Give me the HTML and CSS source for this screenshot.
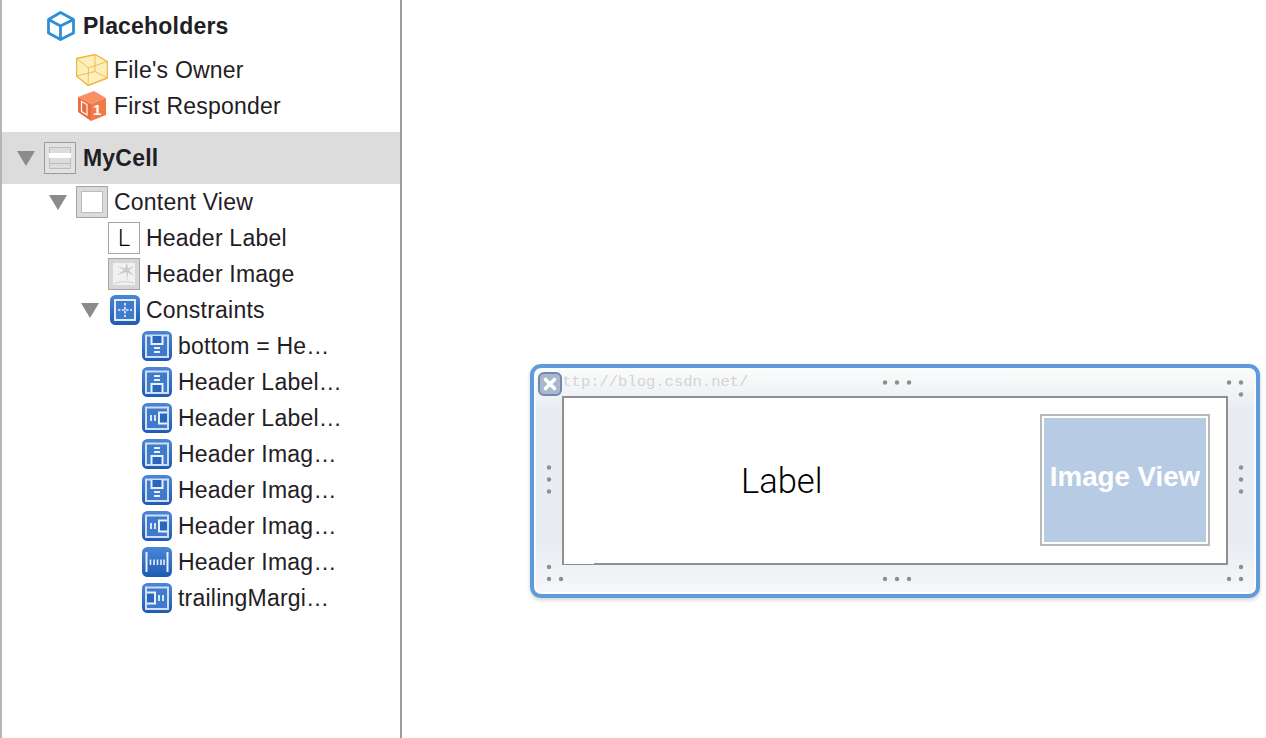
FILE: index.html
```html
<!DOCTYPE html>
<html lang="en">
<head>
<meta charset="utf-8">
<title>MyCell</title>
<link rel="stylesheet" href="styles.css">
</head>
<body>
<svg class="defs" width="0" height="0" aria-hidden="true">
  <defs>
    <linearGradient id="blue" x1="0" y1="0" x2="0" y2="1">
      <stop offset="0" stop-color="#4a86d8"/>
      <stop offset="1" stop-color="#1f5bb2"/>
    </linearGradient>
    <g id="bd"><rect x="0" y="0" width="30" height="30" rx="5.500" fill="url(#blue)"/></g>
    <g id="frame"><rect x="4" y="4.500" width="22" height="21.500" fill="#3f7bcd" stroke="#cfdef2" stroke-width="2"/></g>
  </defs>
</svg>
<div class="app">
  <aside class="outline">
    <div class="row head l-ph">
      <svg class="ic-cube" viewBox="0 0 28 30"><path d="M13.500 1.500 26.500 8.500V22L13.500 28.500 1.500 22V8.500ZM1.500 8.500 13.500 15 26.500 8.500M13.500 15V28.500" fill="none" stroke="#2d8fd8" stroke-width="2.800" stroke-linejoin="round"/></svg>
      <span class="bold">Placeholders</span>
    </div>
    <div class="row l1 first">
      <svg class="ic32" viewBox="0 0 32 32"><path d="M0.500 4.500 19 0.500 31.500 7.500V24L12 31.500 0.500 22Z" fill="#fdefbb" stroke="#efb542" stroke-width="1.400" stroke-linejoin="round"/><path d="M0.500 4.500 12.500 14 31.500 7.500M12.500 14 12 31.500M19 0.500V17.500L0.500 22M19 17.500 31.500 24" fill="none" stroke="#efb542" stroke-opacity=".85"/></svg>
      <span>File's Owner</span>
    </div>
    <div class="row l1">
      <svg class="ic32" viewBox="0 0 32 32"><path d="M2 7 18 1 30 8 15 14Z" fill="#f79063"/><path d="M2 7 15 14V31L2 22Z" fill="#ed6c3b"/><path d="M15 14 30 8V25L15 31Z" fill="#f27a49"/><path d="M5.500 11.500 11 14.500V25L5.500 21.500Z" fill="none" stroke="#fff" stroke-width="1.200"/><text x="17" y="25" class="one">1</text></svg>
      <span>First Responder</span>
    </div>
    <div class="row selected">
      <span class="tri"></span>
      <svg class="ic32" viewBox="0 0 32 32"><rect x="0.500" y="0.500" width="31" height="31" fill="#e2e2e2" stroke="#9b9b9b"/><rect x="5.500" y="5.500" width="21" height="21" fill="#dcdcdc" stroke="#bdbdbd"/><rect x="5" y="11" width="22" height="5" fill="#fff"/><path d="M5 21.500H27" stroke="#bdbdbd"/></svg>
      <span class="bold">MyCell</span>
    </div>
    <div class="row l1">
      <span class="tri"></span>
      <svg class="ic32" viewBox="0 0 32 32"><rect x="0.500" y="0.500" width="31" height="31" fill="#dadada" stroke="#a5a5a5"/><rect x="5.500" y="5.500" width="21" height="21" fill="#fff" stroke="#bcbcbc"/></svg>
      <span>Content View</span>
    </div>
    <div class="row l2">
      <span class="lbl-ic">L</span>
      <span>Header Label</span>
    </div>
    <div class="row l2">
      <svg class="ic32" viewBox="0 0 32 32"><rect x="0.500" y="0.500" width="31" height="31" fill="#d6d6d6" stroke="#a5a5a5"/><rect x="5" y="5" width="22" height="22" fill="#f1f1f1"/><path d="M19 24 18.500 14 9 17 16 12 9 8 17 10.500 19 5 20 10.500 26 8 21 12.500 26 18 20 14.500Z" fill="#c9c9c9"/><path d="M6 25.500Q15 22 26 25" stroke="#cfcfcf" fill="none"/></svg>
      <span>Header Image</span>
    </div>
    <div class="row l2">
      <span class="tri tri-c"></span>
      <svg class="ic30" viewBox="0 0 30 30"><use href="#bd"/><rect x="5" y="5" width="20" height="20" fill="#3f7bcd" stroke="#e3ecf8" stroke-width="2"/><path d="M15 8V22M8 15H22" stroke="#f0f5fc" stroke-width="1.600" stroke-dasharray="2.500 1.500"/></svg>
      <span>Constraints</span>
    </div>
    <div class="row l3">
      <svg class="ic30" viewBox="0 0 30 30"><use href="#bd"/><use href="#frame"/><path d="M9.500 5V13H20.500V5" fill="#2a66bd" stroke="#e8f0fa" stroke-width="2"/><path d="M12 17H18M12 21H18" stroke="#e8f0fa" stroke-width="1.800"/></svg>
      <span>bottom = He…</span>
    </div>
    <div class="row l3">
      <svg class="ic30" viewBox="0 0 30 30"><use href="#bd"/><use href="#frame"/><path d="M9.500 25V17H20.500V25" fill="#2a66bd" stroke="#e8f0fa" stroke-width="2"/><path d="M12 9H18M12 13H18" stroke="#e8f0fa" stroke-width="1.800"/></svg>
      <span>Header Label…</span>
    </div>
    <div class="row l3">
      <svg class="ic30" viewBox="0 0 30 30"><use href="#bd"/><use href="#frame"/><path d="M25 9.500H17V20.500H25" fill="#2a66bd" stroke="#e8f0fa" stroke-width="2"/><path d="M9 12V18M13 12V18" stroke="#e8f0fa" stroke-width="1.800"/></svg>
      <span>Header Label…</span>
    </div>
    <div class="row l3">
      <svg class="ic30" viewBox="0 0 30 30"><use href="#bd"/><use href="#frame"/><path d="M9.500 25V17H20.500V25" fill="#2a66bd" stroke="#e8f0fa" stroke-width="2"/><path d="M12 9H18M12 13H18" stroke="#e8f0fa" stroke-width="1.800"/></svg>
      <span>Header Imag…</span>
    </div>
    <div class="row l3">
      <svg class="ic30" viewBox="0 0 30 30"><use href="#bd"/><use href="#frame"/><path d="M9.500 5V13H20.500V5" fill="#2a66bd" stroke="#e8f0fa" stroke-width="2"/><path d="M12 17H18M12 21H18" stroke="#e8f0fa" stroke-width="1.800"/></svg>
      <span>Header Imag…</span>
    </div>
    <div class="row l3">
      <svg class="ic30" viewBox="0 0 30 30"><use href="#bd"/><use href="#frame"/><path d="M25 9.500H17V20.500H25" fill="#2a66bd" stroke="#e8f0fa" stroke-width="2"/><path d="M9 12V18M13 12V18" stroke="#e8f0fa" stroke-width="1.800"/></svg>
      <span>Header Imag…</span>
    </div>
    <div class="row l3">
      <svg class="ic30" viewBox="0 0 30 30"><use href="#bd"/><path d="M4.500 5V25M25.500 5V25" stroke="#e8f0fa" stroke-width="2"/><path d="M8.500 12.500V18M12 12.500V18M15.500 12.500V18M19 12.500V18M22 12.500V18" stroke="#e8f0fa" stroke-width="1.600"/></svg>
      <span>Header Imag…</span>
    </div>
    <div class="row l3">
      <svg class="ic30" viewBox="0 0 30 30"><use href="#bd"/><use href="#frame"/><path d="M5 9.500H13V20.500H5" fill="#2a66bd" stroke="#e8f0fa" stroke-width="2"/><path d="M17 12V18M21 12V18" stroke="#e8f0fa" stroke-width="1.800"/></svg>
      <span>trailingMargi…</span>
    </div>
  </aside>
  <main class="canvas">
    <section class="cell">
      <div class="content">
        <span class="label">Label</span>
        <div class="image-view"><span>Image View</span></div>
      </div>
      <span class="mark">http://blog.csdn.net/</span>
      <span class="close">
        <svg viewBox="0 0 24 24" width="24" height="24"><rect x="1" y="1" width="22" height="22" rx="5" fill="#a8b8ce" stroke="#7189aa" stroke-width="2"/><path d="M7.500 7.500 16.500 16.500M16.500 7.500 7.500 16.500" stroke="#fff" stroke-width="3.600" stroke-linecap="round"/></svg>
      </span>
      <svg class="dots" width="730" height="234" viewBox="0 0 730 234">
        <g fill="#8f8f8f">
          <circle cx="355" cy="18.500" r="2.200"/><circle cx="367" cy="18.500" r="2.200"/><circle cx="379" cy="18.500" r="2.200"/>
          <circle cx="699" cy="18.500" r="2.200"/><circle cx="711" cy="18.500" r="2.200"/><circle cx="711" cy="30.500" r="2.200"/>
          <circle cx="19" cy="103.500" r="2.200"/><circle cx="19" cy="115.500" r="2.200"/><circle cx="19" cy="127.500" r="2.200"/>
          <circle cx="711" cy="103.500" r="2.200"/><circle cx="711" cy="115.500" r="2.200"/><circle cx="711" cy="127.500" r="2.200"/>
          <circle cx="19" cy="203" r="2.200"/><circle cx="19" cy="215" r="2.200"/><circle cx="31" cy="215" r="2.200"/>
          <circle cx="355" cy="215" r="2.200"/><circle cx="367" cy="215" r="2.200"/><circle cx="379" cy="215" r="2.200"/>
          <circle cx="711" cy="203" r="2.200"/><circle cx="699" cy="215" r="2.200"/><circle cx="711" cy="215" r="2.200"/>
        </g>
      </svg>
    </section>
  </main>
</div>
</body>
</html>
```
FILE: styles.css
```css
* { box-sizing: border-box; }
html, body { margin: 0; height: 100%; background: #fff; }
body { overflow: hidden; font-family: "Liberation Sans", Arial, sans-serif; color: #1f2024; }
.defs { position: absolute; }
.app { display: flex; height: 738px; }

.outline {
  width: 402px;
  flex: none;
  padding-top: 8px;
  border-left: 2px solid #b4b4b4;
  border-right: 2px solid #9c9c9c;
  font-size: 23px;
  letter-spacing: 0.22px;
}
.row { display: flex; align-items: center; height: 36px; gap: 6px; white-space: nowrap; }
.row.first { margin-top: 8px; }
.bold { font-weight: 700; letter-spacing: 0.2px; }
.l-ph { padding-left: 45px; gap: 8px; }
.l1 { padding-left: 74px; }
.l2 { padding-left: 106px; }
.l3 { padding-left: 140px; }
.selected {
  height: 52px;
  margin-top: 8px;
  padding-left: 42px;
  background: #dcdcdc;
  gap: 7px;
}
.tri {
  width: 0; height: 0;
  border-left: 9px solid transparent;
  border-right: 9px solid transparent;
  border-top: 15px solid #8b8b8b;
  margin-left: -27px;
  margin-right: 3px;
}
.selected .tri { margin-right: 2px; }
.l2 .tri-c { margin-right: 5px; }
.ic-cube { width: 28px; height: 30px; flex: none; }
.ic32 { width: 32px; height: 32px; flex: none; }
.ic30 { width: 30px; height: 30px; flex: none; }
.one { font: 700 15px "Liberation Sans", Arial, sans-serif; fill: #fff; letter-spacing: 0; }
.lbl-ic {
  width: 32px; height: 32px; flex: none;
  display: flex; align-items: center; justify-content: center;
  border: 1px solid #a5a5a5;
  background: #fff;
  color: #000;
  font: 300 23px Roboto, "Liberation Sans", sans-serif;
  letter-spacing: 0;
}

.canvas { flex: 1; padding: 364px 0 0 128px; }
.cell {
  position: relative;
  width: 730px;
  height: 234px;
  padding: 28px;
  border: 4px solid #5f9bd9;
  border-radius: 11px;
  background: linear-gradient(#fbfcfc 0, #e9edf2 18%, #e9edf2 78%, #f6f7f9 100%);
  box-shadow: inset 0 0 0 2px #fbfcfd, 0 2px 4px rgba(0,0,0,.18);
}
.content {
  position: relative;
  display: flex;
  align-items: center;
  justify-content: space-between;
  width: 666px;
  height: 169px;
  padding: 0 16px 0 177px;
  border: 2px solid #909090;
  background: #fff;
}
.content::after {
  content: "";
  position: absolute;
  left: 0;
  bottom: -1px;
  width: 30px;
  height: 1px;
  background: #fff;
}
.label { font: 300 34.5px Roboto, "Liberation Sans", sans-serif; color: #000; }
.image-view {
  align-self: flex-start;
  flex: none;
  width: 170px;
  height: 132px;
  margin-top: 16px;
  padding: 2px;
  border: 2px solid #b9b9b9;
  background: #fff;
}
.image-view span {
  display: flex; align-items: center; justify-content: center;
  width: 100%; height: 100%;
  padding-bottom: 6px;
  background: #b7cce4;
  color: #fff;
  font-weight: 700;
  font-size: 27.7px;
}
.close { position: absolute; left: 4px; top: 4px; width: 24px; height: 24px; line-height: 0; }
.mark {
  position: absolute; left: 19px; top: 5px;
  font: 15.5px "Liberation Mono", monospace;
  color: #d4d4d4;
  white-space: nowrap;
}
.dots { position: absolute; left: -4px; top: -4px; filter: blur(0.6px); }
```
